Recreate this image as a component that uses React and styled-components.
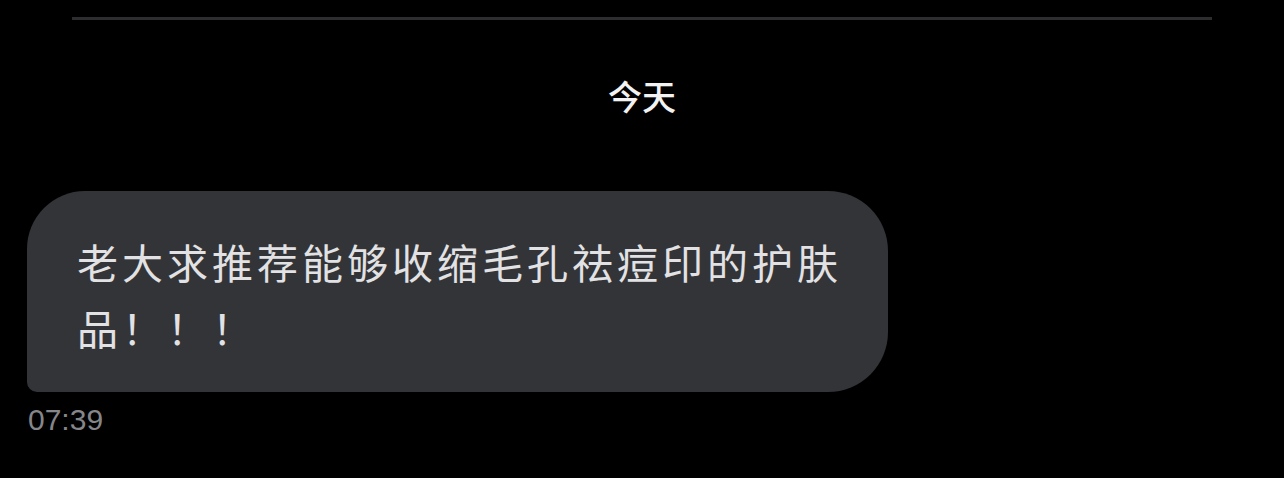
import React from "react";
import styled, { createGlobalStyle } from "styled-components";

const GlobalStyle = createGlobalStyle`
  html, body {
    margin: 0;
    padding: 0;
    background: #000;
  }
  body {
    font-family: "Noto Sans CJK SC", "Noto Sans", sans-serif;
  }
`;

const Screen = styled.div`
  display: flex;
  flex-direction: column;
  min-height: 478px;
  background: #000;
  overflow: hidden;
`;

const Divider = styled.div`
  height: 3px;
  margin: 17px 72px 0;
  background: #2d2d30;
`;

const DateLabel = styled.div`
  margin-top: 56px;
  text-align: center;
  font-size: 34px;
  line-height: 40px;
  font-weight: 500;
  color: #f2f2f2;
`;

const MessageRow = styled.div`
  display: flex;
  flex-direction: column;
  align-items: flex-start;
  margin: 75px 0 0 27px;
`;

const Bubble = styled.div`
  box-sizing: border-box;
  width: 861px;
  padding: 37px 40px 32px 50px;
  background: #333438;
  border-radius: 58px 60px 60px 10px;
  color: #e2e2e4;
  font-size: 41px;
  line-height: 66px;
  letter-spacing: 4px;
`;

const Time = styled.div`
  margin-top: 11px;
  margin-left: 1px;
  font-family: "Liberation Sans", Arial, sans-serif;
  font-size: 30px;
  line-height: 34px;
  color: #86868a;
`;

export default function App() {
  return (
    <>
      <GlobalStyle />
      <Screen>
        <Divider />
        <DateLabel>今天</DateLabel>
        <MessageRow>
          <Bubble>老大求推荐能够收缩毛孔祛痘印的护肤品！！！</Bubble>
          <Time>07:39</Time>
        </MessageRow>
      </Screen>
    </>
  );
}
